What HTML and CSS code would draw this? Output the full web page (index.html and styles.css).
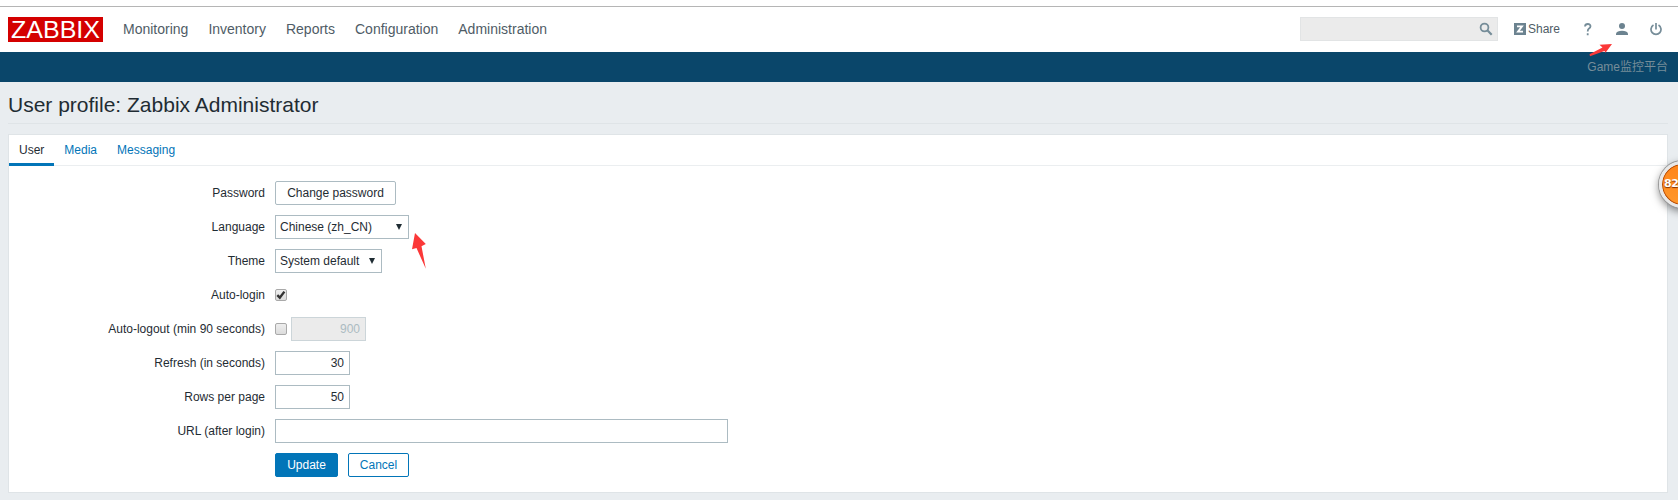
FILE: index.html
```html
<!DOCTYPE html>
<html lang="en">
<head>
<meta charset="utf-8">
<title>User profile</title>
<link rel="stylesheet" href="styles.css">
</head>
<body>
<header class="top">
  <div class="logo"><svg width="95" height="25" viewBox="0 0 95 25"><text class="logo-text" x="3" y="21" textLength="89" lengthAdjust="spacingAndGlyphs">ZABBIX</text></svg></div>
  <nav class="menu"><a>Monitoring</a><a>Inventory</a><a>Reports</a><a>Configuration</a><a>Administration</a></nav>
  <div class="tools">
    <div class="search"><svg width="14" height="14" viewBox="0 0 14 14" fill="none" stroke="#768d99"><circle cx="5.5" cy="5.5" r="3.9" stroke-width="1.8"/><path d="M8.3 8.3l4.4 4.4" stroke-width="2.2"/></svg></div>
    <a class="share"><svg width="12" height="12" viewBox="0 0 12 12"><path fill="#6c8390" d="M0 0h12v12H0z"/><path fill="none" stroke="#fff" stroke-width="1.8" d="M3 3.4h5L4 8.6H9"/></svg><span>Share</span></a>
    <svg class="help" width="8" height="13" viewBox="0 0 8 13"><path fill="none" stroke="#768d99" stroke-width="1.8" d="M1 3.5Q1.2 1 3.8 1Q6.5 1 6.5 3.3Q6.5 4.6 5 5.5Q3.7 6.4 3.7 8.4M3.7 10.2v2"/></svg>
    <svg class="user" width="12" height="12" viewBox="0 0 12 12" fill="#6c8390"><circle cx="6" cy="3" r="3"/><path d="M0 12v-1.5Q1 7.7 6 7.7t6 2.8V12z"/></svg>
    <svg class="power" width="12" height="13" viewBox="0 0 12 13" fill="none" stroke="#768d99" stroke-width="1.7"><path d="M6 0v6.5M3.5 2.1A5 5 0 1 0 8.5 2.1"/></svg>
  </div>
</header>
<div class="subbar">Game监控平台</div>
<main class="page">
  <h1>User profile: Zabbix Administrator</h1>
  <section class="panel">
    <div class="tabs"><a class="tab active">User</a><a class="tab">Media</a><a class="tab">Messaging</a></div>
    <div class="form">
      <label>Password</label><div><span class="btn change">Change password</span></div>
      <label>Language</label><div><span class="select language">Chinese (zh_CN)<i class="caret"></i></span></div>
      <label>Theme</label><div><span class="select theme">System default<i class="caret"></i></span></div>
      <label>Auto-login</label><div><span class="check"><svg width="10" height="10" viewBox="0 0 10 10"><path fill="none" stroke="#333" stroke-width="2.4" d="M1.3 5.2l2.5 2.5L8.4 1.6"/></svg></span></div>
      <label>Auto-logout (min 90 seconds)</label><div><span class="check"></span><span class="input disabled">900</span></div>
      <label>Refresh (in seconds)</label><div><span class="input">30</span></div>
      <label>Rows per page</label><div><span class="input">50</span></div>
      <label>URL (after login)</label><div><span class="input url"></span></div>
      <label></label><div><span class="btn update">Update</span><span class="btn cancel">Cancel</span></div>
    </div>
  </section>
</main>
<svg class="arrow arrow-user" width="24" height="14" viewBox="0 0 24 14"><path fill="#fb3838" d="M23 1L10.5 1.8L13.5 4.6L.5 11.2L1 13.2L15.5 7.9L16.5 9.7z"/></svg>
<svg class="arrow arrow-language" width="16" height="38" viewBox="0 0 16 38"><path fill="#fb3838" d="M3 1L0 17.2L4.5 16L13.8 36.8L9.5 14.3L13.8 12z"/></svg>
<div class="badge-clip"><div class="badge">82</div></div>
</body>
</html>
```
FILE: styles.css
```css
* { box-sizing: border-box; }
body {
  margin: 0;
  height: 500px;
  overflow: hidden;
  position: relative;
  background: #e9edf0;
  color: #1f2c33;
  font: 12px/14px "Liberation Sans", Arial, "Noto Sans CJK SC", sans-serif;
}
svg { display: block; flex: none; }
.top {
  height: 52px;
  padding: 1px 16px 0 8px;
  background: linear-gradient(#fff 6px, #b5b5b5 6px, #b5b5b5 7px, #fff 7px);
  display: flex;
  align-items: flex-start;
}
.logo { margin-top: 16px; background: #d40000; width: 95px; height: 25px; }
.logo-text { font: 24.5px "Liberation Sans", Arial, sans-serif; fill: #fff; }
.menu { display: flex; gap: 20px; margin: 20px 0 0 20px; font-size: 14px; line-height: 16px; color: #4f5c66; }
.tools { margin: 16px 0 0 auto; height: 24px; display: flex; align-items: center; }
.search {
  width: 198px;
  height: 24px;
  padding-right: 4px;
  display: flex;
  align-items: center;
  justify-content: flex-end;
  background: #ebebeb;
  border: 1px solid #e2e4e5;
}
.share { display: flex; align-items: center; gap: 2px; width: 48px; margin-left: 16px; color: #4f5c66; }
.help { margin-left: 22px; }
.user { margin-left: 24px; }
.power { margin-left: 22px; }
.subbar {
  height: 30px;
  padding: 8px 10px 0 0;
  background: #0a466a;
  color: #768d99;
  text-align: right;
}
.page { padding: 0 10px 0 8px; }
h1 {
  margin: 0 0 10px;
  height: 42px;
  padding-top: 12px;
  border-bottom: 1px solid #dfe4e7;
  font-size: 21px;
  line-height: 22px;
  font-weight: normal;
}
.panel { height: 359px; background: #fff; border: 1px solid #dfe4e7; }
.tabs { display: flex; height: 31px; border-bottom: 1px solid #ebeef0; color: #0275b8; }
.tab { height: 31px; padding: 8px 10px 0; }
.active { border-bottom: 3px solid #0275b8; color: #1f2c33; }
.form {
  display: grid;
  grid-template-columns: 256px 1fr;
  grid-auto-rows: 24px;
  gap: 10px;
  padding-top: 15px;
}
.form label { text-align: right; padding-top: 5px; }
.form > div { display: flex; align-items: center; }
.btn, .select, .input {
  height: 24px;
  border: 1px solid #acbbc2;
  line-height: 22px;
  background: #fff;
}
.btn { text-align: center; border-radius: 2px; }
.change { width: 121px; }
.update { width: 63px; background: #0275b8; border-color: #0275b8; color: #fff; }
.cancel { width: 61px; margin-left: 10px; border-color: #0275b8; color: #0275b8; }
.select { display: flex; align-items: center; justify-content: space-between; padding: 0 6px 0 4px; }
.language { width: 134px; }
.theme { width: 107px; }
.caret { border: 3px solid transparent; border-top: 6px solid #1f2c33; border-bottom: 0; }
.input { width: 75px; padding-right: 5px; text-align: right; }
.url { width: 453px; }
.disabled { margin-left: 4px; background: #ebebeb; border-color: #ccd5d9; color: #acbbc2; }
.check {
  width: 12px;
  height: 12px;
  margin-bottom: 1px;
  border: 1px solid #a9a9a9;
  border-radius: 2px;
  background: linear-gradient(#eee, #dcdcdc);
}
.arrow { position: absolute; }
.arrow-user { left: 1589px; top: 43px; }
.arrow-language { left: 412px; top: 232px; }
.badge-clip { position: absolute; right: 0; top: 140px; width: 50px; height: 90px; overflow: hidden; }
.badge {
  position: absolute;
  left: 31px;
  top: 21px;
  width: 47px;
  height: 47px;
  border: 3px solid #e8e8e8;
  border-radius: 50%;
  padding: 12px 0 0 2px;
  background: linear-gradient(#ff8418, #ff982c);
  background-clip: padding-box;
  box-shadow: inset 0 0 0 1px #b34a08, 0 0 0 1px #999, 0 3px 8px rgba(0,0,0,.5);
  color: #fff;
  font: bold 11px/16px "DejaVu Sans", sans-serif;
  letter-spacing: -.5px;
  text-shadow: 0 1px 1px #803000;
}
```
